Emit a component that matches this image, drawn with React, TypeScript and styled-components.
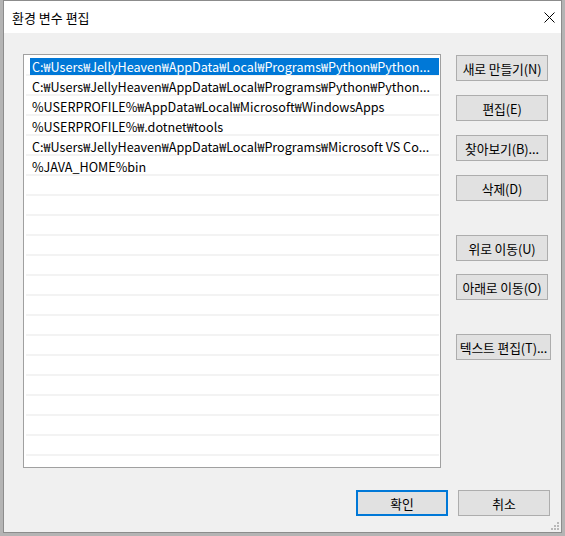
import styled, { createGlobalStyle } from "styled-components";

const GlobalStyle = createGlobalStyle`
  html, body {
    margin: 0;
    padding: 0;
    background: #b4b4b4;
  }
  body {
    font-family: "Noto Sans CJK KR", "Noto Sans", sans-serif;
    font-size: 12px;
    color: #000;
  }
`;

const Page = styled.div`
  width: 565px;
  height: 536px;
  padding-left: 3px;
  box-sizing: border-box;
  overflow: hidden;
`;

const Window = styled.div`
  width: 559px;
  height: 533px;
  box-sizing: border-box;
  border: 1px solid #8c8c8c;
  background: #f0f0f0;
  display: flex;
  flex-direction: column;
  position: relative;
`;

const TitleBar = styled.div`
  height: 32px;
  background: #fff;
  display: flex;
  align-items: center;
  justify-content: space-between;
  padding: 0 6px 0 8px;
  flex-shrink: 0;
`;

const Title = styled.div`
  font-size: 13px;
  line-height: 16px;
  padding-top: 1px;
`;

const CloseButton = styled.div`
  width: 11px;
  height: 11px;
  display: flex;
  svg {
    display: block;
  }
`;

const Body = styled.div`
  flex: 1;
  display: flex;
  flex-direction: column;
  padding: 21px 0 0 19px;
`;

const Main = styled.div`
  display: flex;
  gap: 15px;
`;

const ListBox = styled.div`
  width: 418px;
  height: 414px;
  box-sizing: border-box;
  border: 1px solid #a0a0a0;
  background: #fff;
  padding: 1px 1px 0 2px;
  overflow: hidden;
`;

const Row = styled.div`
  height: 20px;
  box-sizing: border-box;
  border-bottom: 2px solid #f3f3f3;
  padding: 2px 0 0 4px;
`;

const Cell = styled.div<{ $selected?: boolean }>`
  height: 17px;
  line-height: 17px;
  padding-left: 2px;
  font-size: 12.6px;
  white-space: nowrap;
  overflow: hidden;
  text-overflow: ellipsis;
  background: ${({ $selected }) => ($selected ? "#0078d7" : "transparent")};
  color: ${({ $selected }) => ($selected ? "#fff" : "#000")};
`;

const Side = styled.div`
  display: flex;
  flex-direction: column;
  align-items: flex-start;
  padding-top: 1px;
`;

const Button = styled.div<{ $gap?: number; $width?: number; $primary?: boolean }>`
  width: ${({ $width }) => $width ?? 92}px;
  height: 26px;
  box-sizing: border-box;
  margin-top: ${({ $gap }) => $gap ?? 0}px;
  background: #e1e1e1;
  border: ${({ $primary }) => ($primary ? "2px solid #0078d7" : "1px solid #adadad")};
  display: flex;
  align-items: center;
  justify-content: center;
  font-size: 12.8px;
  letter-spacing: -0.1px;
  white-space: nowrap;
`;

const Footer = styled.div`
  display: flex;
  justify-content: flex-end;
  gap: 10px;
  padding-right: 11px;
  margin-top: 22px;
`;

const Grip = styled.div`
  position: absolute;
  right: 2px;
  bottom: 2px;
  width: 9px;
  height: 9px;
  svg {
    display: block;
  }
`;

const paths = [
  "C:₩Users₩JellyHeaven₩AppData₩Local₩Programs₩Python₩Python...",
  "C:₩Users₩JellyHeaven₩AppData₩Local₩Programs₩Python₩Python...",
  "%USERPROFILE%₩AppData₩Local₩Microsoft₩WindowsApps",
  "%USERPROFILE%₩.dotnet₩tools",
  "C:₩Users₩JellyHeaven₩AppData₩Local₩Programs₩Microsoft VS Co...",
  "%JAVA_HOME%bin",
];

const sideButtons = [
  { label: "새로 만들기(N)", gap: 0 },
  { label: "편집(E)", gap: 14 },
  { label: "찾아보기(B)...", gap: 14 },
  { label: "삭제(D)", gap: 14 },
  { label: "위로 이동(U)", gap: 34 },
  { label: "아래로 이동(O)", gap: 13 },
  { label: "텍스트 편집(T)...", gap: 34, width: 95 },
];

export default function App() {
  const rows = [...paths, ...Array(16).fill("")];
  return (
    <Page>
      <GlobalStyle />
      <Window>
        <TitleBar>
          <Title>환경 변수 편집</Title>
          <CloseButton>
            <svg width="11" height="11" viewBox="0 0 11 11">
              <path d="M0.5 0.5 L10.5 10.5 M10.5 0.5 L0.5 10.5" stroke="#000" strokeWidth="1" />
            </svg>
          </CloseButton>
        </TitleBar>
        <Body>
          <Main>
            <ListBox>
              {rows.map((text, i) => (
                <Row key={i}>
                  <Cell $selected={i === 0}>{text}</Cell>
                </Row>
              ))}
            </ListBox>
            <Side>
              {sideButtons.map((b) => (
                <Button key={b.label} $gap={b.gap} $width={b.width}>
                  {b.label}
                </Button>
              ))}
            </Side>
          </Main>
          <Footer>
            <Button $primary>확인</Button>
            <Button>취소</Button>
          </Footer>
        </Body>
        <Grip>
          <svg width="9" height="9" viewBox="0 0 9 9">
            {[
              [7, 1],
              [7, 4],
              [4, 4],
              [7, 7],
              [4, 7],
              [1, 7],
            ].map(([x, y]) => (
              <rect key={`${x}-${y}`} x={x} y={y} width="2" height="2" fill="#b8b8b8" />
            ))}
          </svg>
        </Grip>
      </Window>
    </Page>
  );
}
